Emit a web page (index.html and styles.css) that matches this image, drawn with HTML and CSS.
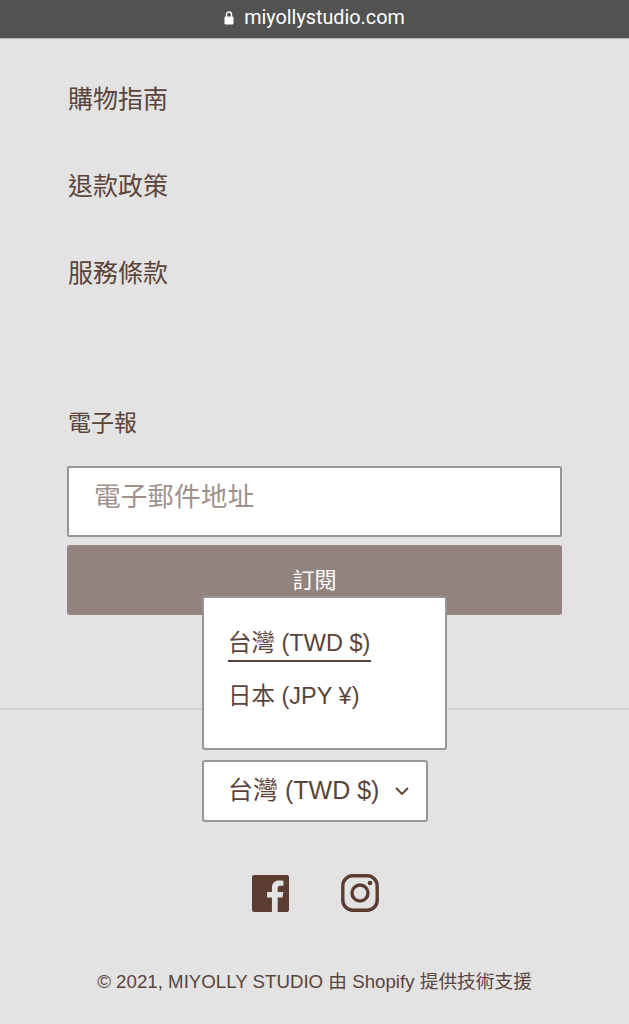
FILE: index.html
```html
<!DOCTYPE html>
<html lang="zh-TW">
<head>
  <meta charset="UTF-8" />
  <meta name="viewport" content="width=device-width, initial-scale=1" />
  <title>MIYOLLY STUDIO</title>
  <link rel="stylesheet" href="styles.css">
</head>
<body>

  <div class="urlbar">
    <svg class="lock" viewBox="0 0 10 14" width="10" height="14">
      <path d="M2.5 6V3.5a2.5 2.5 0 0 1 5 0V6" fill="none" stroke="#fff" stroke-width="1.4"/>
      <rect x="0.5" y="5.5" width="9" height="8" rx="1.2" fill="#fff"/>
    </svg>
    <span>miyollystudio.com</span>
  </div>

  <footer class="footer">
    <ul class="links">
      <li><a href="#">購物指南</a></li>
      <li><a href="#">退款政策</a></li>
      <li><a href="#">服務條款</a></li>
    </ul>

    <form class="newsletter">
      <div class="newsletter-title">電子報</div>
      <input class="email" type="email" placeholder="電子郵件地址" />
      <button class="subscribe" type="button">訂閱</button>
    </form>

    <hr class="divider" />

    <div class="currency">
      <div class="currency-menu">
        <a class="currency-item active" href="#">台灣 (TWD $)</a>
        <a class="currency-item" href="#">日本 (JPY ¥)</a>
      </div>
      <div class="currency-select">
        <span>台灣 (TWD $)</span>
        <svg viewBox="0 0 14 8" width="14" height="8">
          <path d="M1 1l6 6 6-6" fill="none" stroke="#5c4033" stroke-width="1.8"/>
        </svg>
      </div>
    </div>

    <div class="social">
      <a href="#" aria-label="Facebook">
        <svg viewBox="0 0 36 36" width="37" height="37">
          <path fill="#5c3d31" d="M2 0h32a2 2 0 0 1 2 2v32a2 2 0 0 1-2 2h-9V22h4.700l.7-5.400H25v-3.500c0-1.600.4-2.600 2.700-2.600h2.900V5.600c-.5-.1-2.200-.2-4.200-.2-4.200 0-7 2.500-7 7.200v4h-4.700V22h4.700v14H2a2 2 0 0 1-2-2V2a2 2 0 0 1 2-2z"/>
        </svg>
      </a>
      <a href="#" aria-label="Instagram">
        <svg viewBox="0 0 38 38" width="38" height="38">
          <rect x="1.800" y="1.800" width="34.400" height="34.400" rx="10" fill="none" stroke="#5c3d31" stroke-width="3.400"/>
          <circle cx="19" cy="19" r="8" fill="none" stroke="#5c3d31" stroke-width="3.400"/>
          <circle cx="29" cy="9" r="2.300" fill="#5c3d31"/>
        </svg>
      </a>
    </div>

    <p class="copyright">© 2021, MIYOLLY STUDIO 由 Shopify 提供技術支援</p>
  </footer>

</body>
</html>
```

FILE: styles.css
```css
* {
  margin: 0; padding: 0; box-sizing: border-box;
  font-family: 'Liberation Sans', 'Noto Sans CJK TC', sans-serif;
}

html, body {
  height: 1024px;
  overflow: hidden;
}

body {
  background: #e3e3e3;
  color: #5c4339;
}

a {
  color: inherit;
  text-decoration: none;
}

.urlbar {
  height: 39px;
  background: #525252;
  border-bottom: 1px solid #b5b5b5;
  color: #fff;
  display: flex;
  align-items: center;
  justify-content: center;
  gap: 10px;
  padding-bottom: 3px;
  font-size: 19.8px;
}

.urlbar span {
  font-family: 'Roboto', sans-serif;
}

.links {
  list-style: none;
  margin-top: 14px;
  padding: 0 68px;
}

.links li {
  height: 87px;
  display: flex;
  align-items: center;
  font-size: 25px;
}

.newsletter {
  margin: 0 67px;
  padding-top: 92px;
}

.newsletter-title {
  font-size: 23px;
  line-height: 34px;
  margin-bottom: 26px;
  padding-left: 1px;
}

.email {
  display: block;
  width: 100%;
  height: 71px;
  padding: 0 25px 8px;
  background: #fff;
  border: 2px solid #979797;
  border-radius: 2px;
  font-size: 26.7px;
}

.email::placeholder {
  color: #a0918b;
  opacity: 1;
}

.subscribe {
  display: block;
  width: 100%;
  height: 70px;
  margin-top: 8px;
  padding-bottom: 5px;
  background: #93837e;
  color: #fff;
  border: none;
  border-radius: 3px;
  font-size: 22px;
}

.divider {
  border: none;
  border-top: 2px solid #d3d3d3;
  margin-top: 93px;
}

.currency {
  position: relative;
  margin: 50px 0 0 202px;
  width: 226px;
}

.currency-select {
  height: 62px;
  background: #fff;
  border: 2px solid #979797;
  border-radius: 3px;
  display: flex;
  align-items: center;
  justify-content: space-between;
  padding: 0 17px 0 24px;
  font-size: 25px;
  white-space: nowrap;
}

.currency-select span {
  margin-bottom: 6px;
}

.currency-menu {
  position: absolute;
  left: 0;
  bottom: 72px;
  width: 245px;
  height: 154px;
  background: #fff;
  border: 2px solid #979797;
  border-radius: 3px;
  padding: 28px 24px;
  display: flex;
  flex-direction: column;
  align-items: flex-start;
  gap: 17px;
  font-size: 23.5px;
}

.currency-item {
  line-height: 34px;
  padding-right: 1px;
  white-space: nowrap;
  border-bottom: 2px solid transparent;
}

.currency-item.active {
  border-bottom-color: #5c4339;
}

.social {
  display: flex;
  justify-content: center;
  align-items: center;
  gap: 52px;
  margin-top: 52px;
  padding-left: 2px;
}

.social a {
  display: flex;
}

.copyright {
  text-align: center;
  margin-top: 56px;
  font-size: 18.7px;
  line-height: 28px;
  white-space: nowrap;
}
```
